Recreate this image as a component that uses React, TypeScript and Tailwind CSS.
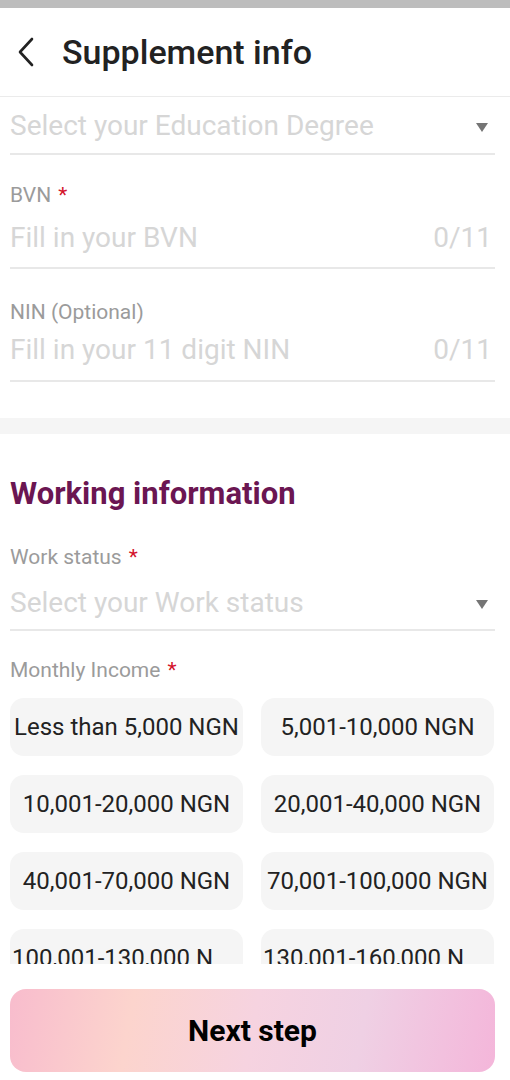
import type { ReactNode } from "react";

const incomes = [
  "Less than 5,000 NGN",
  "5,001-10,000 NGN",
  "10,001-20,000 NGN",
  "20,001-40,000 NGN",
  "40,001-70,000 NGN",
  "70,001-100,000 NGN",
  "100,001-130,000 NGN",
  "130,001-160,000 NGN",
];

function Label({ children, required, className = "" }: { children: ReactNode; required?: boolean; className?: string }) {
  return (
    <p className={`text-[21px] leading-6 text-[#9b9b9b] ${className}`}>
      {children}
      {required && <span className="ml-[7px] text-[#d3142c]">*</span>}
    </p>
  );
}

function Caret() {
  return (
    <svg width="12" height="9" viewBox="0 0 12 9" className="mr-[7px] mt-[3px] shrink-0">
      <path d="M0 0h12L6 9z" fill="#757575" />
    </svg>
  );
}

// underlined field row; spacing is passed in because each one sits a little differently
function FieldRow({ placeholder, select, className }: { placeholder: string; select?: boolean; className: string }) {
  return (
    <div className={`flex items-center justify-between border-b-2 border-[#e8e8e8] ${className}`}>
      <span className="text-[28px] leading-8 text-[#d6d6d6]">{placeholder}</span>
      {select ? <Caret /> : <span className="mr-[3px] text-[28px] leading-8 text-[#d6d6d6]">0/11</span>}
    </div>
  );
}

export default function App() {
  return (
    <div className="flex h-[1080px] w-full flex-col overflow-hidden bg-white font-[Roboto,sans-serif] text-[#222]">
      <div className="h-2 shrink-0 bg-[#bdbdbd]" />

      <header className="flex h-[89px] shrink-0 items-center border-b border-[#ebebeb] pl-[17px]">
        <svg width="18" height="30" viewBox="0 0 18 30" fill="none">
          <path d="M15 2 3 15l12 13" stroke="#222" strokeWidth="2.6" strokeLinecap="round" strokeLinejoin="round" />
        </svg>
        <h1 className="ml-[27px] text-[34px] font-medium text-[#222]">Supplement info</h1>
      </header>

      <main className="min-h-0 flex-1 overflow-hidden">
        <div className="pl-[10px] pr-[15px]">
          <FieldRow select placeholder="Select your Education Degree" className="pt-[13px] pb-[11px]" />

          <Label required className="mt-[28px]">BVN</Label>
          <FieldRow placeholder="Fill in your BVN" className="pt-[15px] pb-[13px]" />

          <Label className="mt-[31px]">NIN (Optional)</Label>
          <FieldRow placeholder="Fill in your 11 digit NIN" className="pt-[10px] pb-[14px]" />
        </div>

        <div className="mt-[36px] h-4 bg-[#f5f5f5]" />

        <div className="pl-[10px] pr-[15px]">
          <h2 className="mt-[42px] text-[31px] font-bold leading-9 text-[#6b1652]">Working information</h2>

          <Label required className="mt-[33px]">Work status</Label>
          <FieldRow select placeholder="Select your Work status" className="pt-[18px] pb-[10px]" />

          <Label required className="mt-[27px]">Monthly Income</Label>

          <div className="mt-[16px] grid grid-cols-2 gap-x-[18px] gap-y-[19px] pr-px">
            {incomes.map((item, i) => (
              <div
                key={item}
                className={`h-[58px] overflow-hidden rounded-[14px] bg-[#f5f5f5] text-[24px] leading-[58px] text-[#222] ${
                  i >= 6 ? "break-all pl-[2px] pr-[16px] text-left" : "whitespace-nowrap px-[2px] text-center"
                }`}
              >
                {item}
              </div>
            ))}
          </div>
        </div>
      </main>

      <footer className="h-[116px] shrink-0 pl-[10px] pr-[15px] pt-[25px]">
        <button className="flex h-[83px] w-full items-center justify-center rounded-[16px] bg-[linear-gradient(100deg,#f8bccd_0%,#fcd4cd_25%,#f6d3e0_50%,#efd0e4_72%,#f4b6da_100%)] text-[30px] font-bold text-black">
          Next step
        </button>
      </footer>
    </div>
  );
}
